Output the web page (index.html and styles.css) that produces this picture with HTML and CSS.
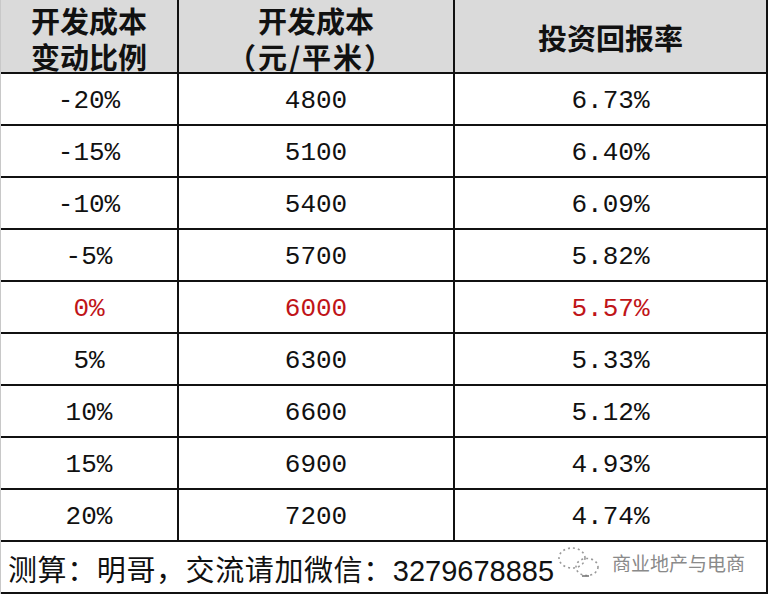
FILE: index.html
```html
<!DOCTYPE html>
<html lang="zh">
<head>
<meta charset="utf-8">
<title>开发成本敏感性分析</title>
<link rel="stylesheet" href="styles.css">
</head>
<body>
<div class="sheet">
  <div class="row head">
    <div class="cell c1 two"><div class="lines">开发成本<br>变动比例</div></div>
    <div class="cell c2 two"><div class="lines">开发成本<br><span class="unit">（元/平米）</span></div></div>
    <div class="cell c3">投资回报率</div>
  </div>
  <div class="row"><div class="cell c1">-20%</div><div class="cell c2">4800</div><div class="cell c3">6.73%</div></div>
  <div class="row"><div class="cell c1">-15%</div><div class="cell c2">5100</div><div class="cell c3">6.40%</div></div>
  <div class="row"><div class="cell c1">-10%</div><div class="cell c2">5400</div><div class="cell c3">6.09%</div></div>
  <div class="row"><div class="cell c1">-5%</div><div class="cell c2">5700</div><div class="cell c3">5.82%</div></div>
  <div class="row base"><div class="cell c1">0%</div><div class="cell c2">6000</div><div class="cell c3">5.57%</div></div>
  <div class="row"><div class="cell c1">5%</div><div class="cell c2">6300</div><div class="cell c3">5.33%</div></div>
  <div class="row"><div class="cell c1">10%</div><div class="cell c2">6600</div><div class="cell c3">5.12%</div></div>
  <div class="row"><div class="cell c1">15%</div><div class="cell c2">6900</div><div class="cell c3">4.93%</div></div>
  <div class="row"><div class="cell c1">20%</div><div class="cell c2">7200</div><div class="cell c3">4.74%</div></div>
  <div class="row foot">
    <div class="note"><span class="cjk">测算：明哥，交流请加微信：</span><span class="num">3279678885</span></div>
    <div class="mark">
      <svg class="wx" viewBox="0 0 50 34" width="50" height="34">
        <ellipse cx="18" cy="13" rx="13" ry="10" fill="none" stroke="#9a9a9a" stroke-width="1.6" stroke-dasharray="2 3"/>
        <ellipse cx="33" cy="22" rx="11" ry="8.5" fill="none" stroke="#9a9a9a" stroke-width="1.6" stroke-dasharray="2 3"/>
        <path d="M28 31 h7" stroke="#777" stroke-width="1.6"/>
      </svg>
      <span class="mark-text">商业地产与电商</span>
    </div>
  </div>
</div>
</body>
</html>
```
FILE: styles.css
```css
html, body {
  margin: 0;
  padding: 0;
  background: #ffffff;
}
.sheet {
  width: 768px;
  box-sizing: border-box;
  border-left: 1px solid #c8c8c8;
  border-right: 2px solid #111;
  font-family: "Liberation Mono", monospace;
  color: #111;
}
.row {
  display: flex;
  height: 52px;
  box-sizing: border-box;
  border-bottom: 2px solid #111;
  font-size: 26px;
}
.cell {
  box-sizing: border-box;
  display: flex;
  align-items: center;
  justify-content: center;
  text-align: center;
  padding-top: 3px;
}
.c1 {
  width: 178px;
  border-right: 2px solid #111;
}
.c2 {
  width: 276px;
  border-right: 2px solid #111;
}
.c3 {
  flex: 1;
}
.head {
  height: 74px;
  background: #dadada;
  font-family: "Noto Sans CJK SC", sans-serif;
  font-weight: 700;
  font-size: 29px;
  line-height: 36px;
}
.head .cell {
  padding-top: 1px;
}
.head .two {
  padding-top: 3px;
}
.lines {
  white-space: nowrap;
}
.unit {
  letter-spacing: 2px;
  margin-left: -10px;
}
.base {
  color: #c01418;
}
.foot {
  position: relative;
  align-items: center;
  border-bottom: 2px solid #111;
}
.note {
  padding-left: 7px;
  padding-top: 2px;
  font-family: "Noto Sans CJK SC", sans-serif;
  font-size: 29px;
  color: #111;
  white-space: nowrap;
}
.cjk {
  letter-spacing: 0.6px;
}
.num {
  font-family: "Liberation Sans", sans-serif;
  font-size: 29px;
}
.mark {
  position: absolute;
  left: 553px;
  top: 3px;
  display: flex;
  align-items: center;
  gap: 8px;
}
.mark-text {
  font-family: "Noto Sans CJK SC", sans-serif;
  font-size: 19px;
  color: #8a8a8a;
}
```
